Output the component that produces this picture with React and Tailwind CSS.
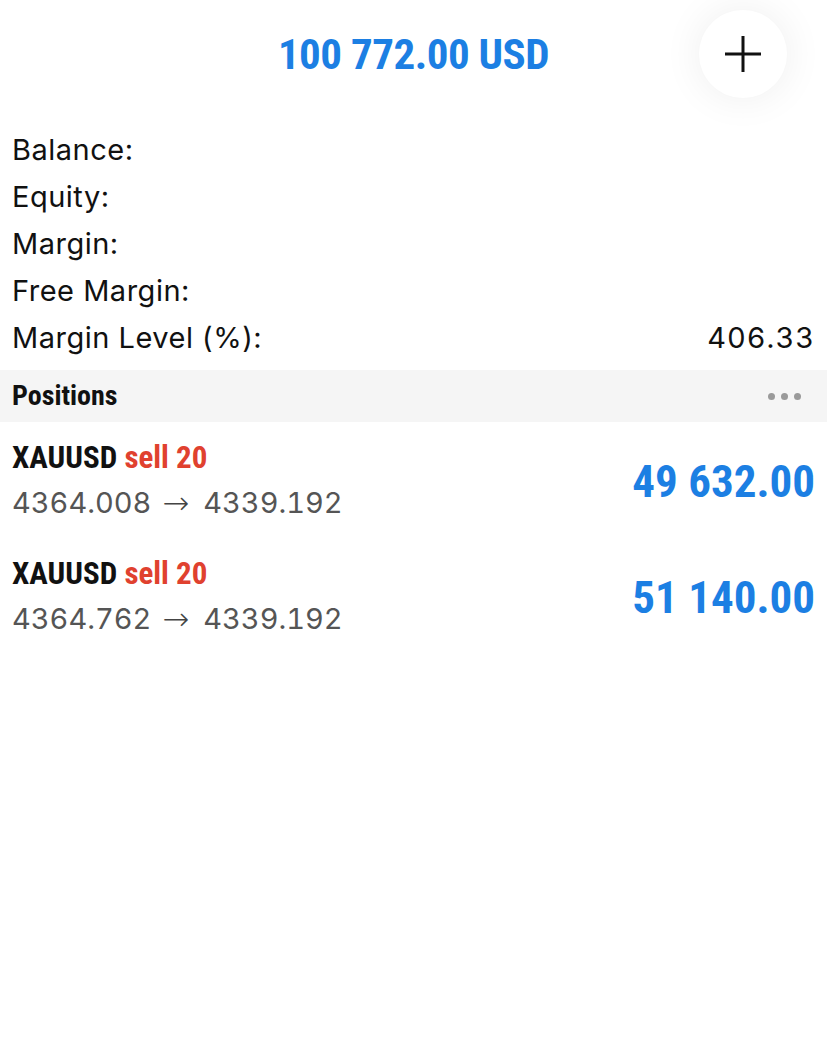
const STATS = [
  { label: 'Balance:', value: '' },
  { label: 'Equity:', value: '' },
  { label: 'Margin:', value: '' },
  { label: 'Free Margin:', value: '' },
  { label: 'Margin Level (%):', value: '406.33' },
]

const POSITIONS = [
  { symbol: 'XAUUSD', side: 'sell 20', open: '4364.008', current: '4339.192', profit: '49 632.00' },
  { symbol: 'XAUUSD', side: 'sell 20', open: '4364.762', current: '4339.192', profit: '51 140.00' },
]

const condensed = "font-['Roboto_Condensed','DejaVu_Sans',sans-serif] [font-stretch:condensed]"
const body = "font-['Inter','Liberation_Sans',sans-serif]"

export default function App() {
  return (
    <div className="w-[827px] min-h-[1053px] bg-white">
      {/* Header */}
      <header className="grid grid-cols-[1fr_auto_1fr] items-center h-[108px]">
        <div />
        <h1 className={`${condensed} font-bold text-[43px] leading-none text-[#1c7fe3] tracking-[-0.5px]`}>
          100 772.00 USD
        </h1>
        <div className="flex justify-end pr-[40px]">
          <button className="w-[88px] h-[88px] rounded-full bg-white flex items-center justify-center shadow-[0_0_40px_rgba(0,0,0,0.07)]">
            <svg width="38" height="38" viewBox="0 0 38 38" stroke="#111" strokeWidth="3" strokeLinecap="butt">
              <path d="M19 1v36M1 19h36" />
            </svg>
          </button>
        </div>
      </header>

      {/* Account stats */}
      <div className={`${body} pt-[18px] pb-[9px]`}>
        {STATS.map((s) => (
          <div key={s.label} className="flex justify-between items-center h-[47px] px-[12px] text-[29px] tracking-[0.5px] text-[#111]">
            <span>{s.label}</span>
            <span className="tracking-[1px] tabular-nums">{s.value}</span>
          </div>
        ))}
      </div>

      {/* Positions header */}
      <div className="flex items-center justify-between h-[52px] px-[12px] bg-[#f5f5f5]">
        <span className={`${condensed} font-bold text-[28px] text-[#111]`}>Positions</span>
        <div className="flex gap-[6px] pr-[14px]">
          <span className="w-[7px] h-[7px] rounded-full bg-[#9a9a9a]" />
          <span className="w-[7px] h-[7px] rounded-full bg-[#9a9a9a]" />
          <span className="w-[7px] h-[7px] rounded-full bg-[#9a9a9a]" />
        </div>
      </div>

      {/* Positions list */}
      {POSITIONS.map((p, i) => (
        <div key={i} className="flex items-center justify-between px-[12px] pt-[14px] pb-[12px]">
          <div>
            <div className={`${condensed} font-bold text-[31px] leading-[44px]`}>
              <span className="text-[#111]">{p.symbol}</span>{' '}
              <span className="text-[#e0412f]">{p.side}</span>
            </div>
            <div className={`${body} flex items-center text-[29px] leading-[46px] text-[#555] tabular-nums`}>
              <span>{p.open}</span>
              <span className="font-['DejaVu_Sans',sans-serif] font-extralight text-[32px] ml-[11px] mr-[14px] text-[#444]">→</span>
              <span>{p.current}</span>
            </div>
          </div>
          <div className={`${condensed} font-bold text-[45px] leading-none text-[#1c7fe3]`}>{p.profit}</div>
        </div>
      ))}
    </div>
  )
}
